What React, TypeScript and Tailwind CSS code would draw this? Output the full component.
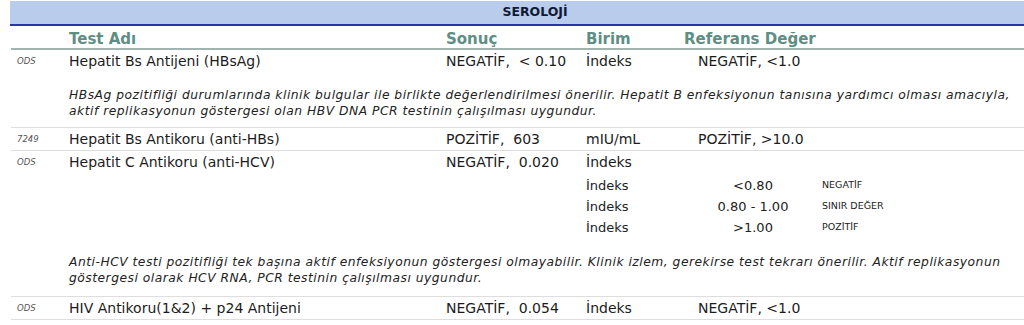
import React from "react";

const font = { fontFamily: '"DejaVu Sans", Verdana, sans-serif' };

type Row = {
  code: string;
  name: string;
  result: string;
  unit: string;
  ref?: string;
};

function TestRow({ row }: { row: Row }) {
  return (
    <div className="flex h-[22px] items-center text-[14px] text-[#1c1c1c]">
      <span className="w-[58px] pl-[6px] text-[8.5px] italic text-[#555]">{row.code}</span>
      <span className="w-[377px]">{row.name}</span>
      <span className="w-[140px] whitespace-pre">{row.result}</span>
      <span className="w-[98px]">{row.unit}</span>
      <span className="pl-[14px]">{row.ref}</span>
    </div>
  );
}

function Comment({ lines }: { lines: string[] }) {
  return (
    <div className="pl-[58px] text-[12.3px] italic leading-[16px] tracking-[0.5px] text-[#222]">
      {lines.map((l) => (
        <p key={l} className="whitespace-nowrap">{l}</p>
      ))}
    </div>
  );
}

const ranges = [
  { unit: "İndeks", value: "<0.80", label: "NEGATİF" },
  { unit: "İndeks", value: "0.80 - 1.00", label: "SINIR DEĞER" },
  { unit: "İndeks", value: ">1.00", label: "POZİTİF" },
];

export default function App() {
  return (
    <div className="h-[325px] w-[1024px] overflow-hidden bg-white" style={font}>
      {/* section band */}
      <div className="ml-[10px] mt-[1px] flex h-[25px] items-center justify-center border-b-2 border-[#2a35a8] bg-[#b9cceb] pl-[36px]">
        <span className="text-[12.5px] font-bold text-[#111a33]">SEROLOJİ</span>
      </div>

      <div className="ml-[11px]">
        {/* column heads */}
        <div className="flex h-[24px] items-center border-b-2 border-[#a3b3b0] pt-[4px] text-[15px] font-bold text-[#5e8e84]">
          <span className="w-[58px]" />
          <span className="w-[377px]">Test Adı</span>
          <span className="w-[140px]">Sonuç</span>
          <span className="w-[98px]">Birim</span>
          <span>Referans Değer</span>
        </div>

        <TestRow row={{ code: "ODS", name: "Hepatit Bs Antijeni (HBsAg)", result: "NEGATİF,  < 0.10", unit: "İndeks", ref: "NEGATİF, <1.0" }} />
        <div className="border-b border-[#dedede] pb-[8px] pt-[15px]">
          <Comment
            lines={[
              "HBsAg pozitifliği durumlarında klinik bulgular ile birlikte değerlendirilmesi önerilir. Hepatit B enfeksiyonun tanısına yardımcı olması amacıyla,",
              "aktif replikasyonun göstergesi olan HBV DNA PCR testinin çalışılması uygundur.",
            ]}
          />
        </div>

        <div className="border-b border-[#dedede]">
          <TestRow row={{ code: "7249", name: "Hepatit Bs Antikoru (anti-HBs)", result: "POZİTİF,  603", unit: "mIU/mL", ref: "POZİTİF, >10.0" }} />
        </div>

        <TestRow row={{ code: "ODS", name: "Hepatit C Antikoru (anti-HCV)", result: "NEGATİF,  0.020", unit: "İndeks" }} />
        <div className="pl-[575px] pt-[2px]">
          {ranges.map((r) => (
            <div key={r.label} className="flex h-[21px] items-center text-[13px] text-[#222]">
              <span className="w-[98px]">{r.unit}</span>
              <span className="w-[138px] text-center">{r.value}</span>
              <span className="text-[9.5px]">{r.label}</span>
            </div>
          ))}
        </div>
        <div className="border-b border-[#dedede] pb-[10px] pt-[16px]">
          <Comment
            lines={[
              "Anti-HCV testi pozitifliği tek başına aktif enfeksiyonun göstergesi olmayabilir. Klinik izlem, gerekirse test tekrarı önerilir. Aktif replikasyonun",
              "göstergesi olarak HCV RNA, PCR testinin çalışılması uygundur.",
            ]}
          />
        </div>

        <div className="border-b border-[#dedede]">
          <TestRow row={{ code: "ODS", name: "HIV Antikoru(1&2) + p24 Antijeni", result: "NEGATİF,  0.054", unit: "İndeks", ref: "NEGATİF, <1.0" }} />
        </div>
      </div>
    </div>
  );
}
